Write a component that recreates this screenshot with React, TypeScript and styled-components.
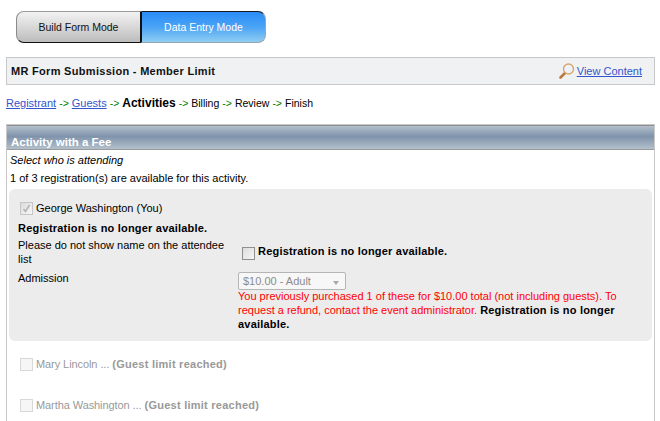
import * as React from "react";
import styled, { createGlobalStyle } from "styled-components";

const GlobalStyle = createGlobalStyle`
  html, body {
    margin: 0;
    padding: 0;
    background: #ffffff;
    overflow: hidden;
  }
  body {
    font-family: "Liberation Sans", Arial, sans-serif;
    font-size: 11px;
    color: #000000;
  }
`;

const Page = styled.div`
  width: 660px;
  height: 421px;
  overflow: hidden;
  padding: 11px 5px 0 6px;
  box-sizing: border-box;
`;

const ModeSwitch = styled.div`
  display: flex;
  width: 250px;
  height: 32px;
  margin-left: 10px;
`;

const ModeButton = styled.div<{ $active?: boolean }>`
  width: 125px;
  height: 32px;
  box-sizing: border-box;
  display: flex;
  align-items: center;
  justify-content: center;
  font-size: 10.5px;
  color: ${(p) => (p.$active ? "#ffffff" : "#111111")};
  border-radius: ${(p) => (p.$active ? "0 8px 8px 0" : "8px 0 0 8px")};
  background: ${(p) =>
    p.$active
      ? "linear-gradient(#2a8cf8 0%, #4aa3f5 50%, #8fcdf2 100%)"
      : "linear-gradient(#f2f2f2 0%, #d8d8d8 50%, #bcbcbc 100%)"};
  border-style: solid;
  border-width: 1px;
  border-color: ${(p) =>
    p.$active
      ? "#1a1a1a #9aa7b2 #9aa7b2 #111111"
      : "#9a9a9a #111111 #111111 #8a8a8a"};
`;

const TitleBar = styled.div`
  margin-top: 14px;
  height: 28px;
  box-sizing: border-box;
  display: flex;
  align-items: center;
  justify-content: space-between;
  padding: 0 6px 0 4px;
  background: #f0f1f3;
  border: 1px solid #c8c8c8;
`;

const Title = styled.div`
  font-weight: bold;
  font-size: 11px;
  letter-spacing: 0.3px;
  color: #111111;
`;

const ViewContent = styled.div`
  display: flex;
  align-items: center;
  gap: 2px;
  margin-right: 6px;
`;

const Link = styled.a`
  color: #3355cc;
  text-decoration: underline;
  font-size: 11px;
  cursor: pointer;
`;

const Steps = styled.div`
  margin-top: 11px;
  height: 14px;
  display: flex;
  align-items: center;
  gap: 3px;
  font-size: 10.5px;
  white-space: nowrap;
`;

const Arrow = styled.span`
  color: #008000;
  font-size: 10.5px;
`;

const CurrentStep = styled.span`
  font-size: 12px;
  font-weight: bold;
`;

const Panel = styled.div`
  margin-top: 14px;
  height: 300px;
  border-left: 1px solid #c8c8c8;
  border-right: 1px solid #c8c8c8;
  border-top: 1px solid #c8c8c8;
`;

const PanelHeader = styled.div`
  height: 25px;
  box-sizing: border-box;
  display: flex;
  align-items: flex-end;
  padding: 0 0 1px 4px;
  color: #ffffff;
  font-weight: bold;
  font-size: 11.5px;
  border-top: 1px solid #8e8e8e;
  border-bottom: 1px solid #9a9a9a;
  background: linear-gradient(#b4c0cc 0%, #7f93ab 45%, #b3bfcb 100%);
`;

const Prompt = styled.div`
  margin: 3px 0 0 3px;
  height: 14px;
  line-height: 14px;
  font-style: italic;
  font-size: 11px;
`;

const Availability = styled.div`
  margin: 4px 0 0 3px;
  height: 14px;
  line-height: 14px;
  font-size: 11px;
`;

const AttendeeCard = styled.div`
  margin: 4px 2px 0;
  height: 152px;
  box-sizing: border-box;
  padding: 9px 9px 0;
  background: #ececec;
  border-radius: 6px;
`;

const CheckRow = styled.div`
  display: flex;
  align-items: center;
  gap: 3px;
  height: 20px;
  padding-left: 2px;
  font-size: 11px;
`;

const Box = styled.span<{ $tone: "checked" | "plain" | "faded" }>`
  width: 13px;
  height: 13px;
  flex: none;
  display: inline-flex;
  align-items: center;
  justify-content: center;
  box-sizing: border-box;
  border: 1px solid ${(p) =>
    p.$tone === "plain" ? "#8f8f8f" : p.$tone === "faded" ? "#d8d8d8" : "#c6c6c6"};
  background: ${(p) =>
    p.$tone === "faded"
      ? "#f6f6f6"
      : "linear-gradient(135deg, #dcdcdc, #f6f6f6)"};
`;

const Unavailable = styled.div`
  font-weight: bold;
  font-size: 11px;
  letter-spacing: 0.2px;
  margin-top: 3px;
  height: 14px;
  line-height: 14px;
`;

const FormGrid = styled.div`
  display: grid;
  grid-template-columns: 220px 1fr;
  row-gap: 5px;
  margin-top: 3px;
  font-size: 11px;
`;

const FieldLabel = styled.div`
  line-height: 14px;
  width: 210px;
  font-size: 11px;
`;

const OptOut = styled.div`
  display: flex;
  align-items: flex-start;
  gap: 3px;
  padding: 6px 0 0 4px;
  font-weight: bold;
  font-size: 11px;
  letter-spacing: 0.2px;
  line-height: 14px;
  ${Box} {
    margin-top: 3px;
  }
`;

const Select = styled.div`
  width: 108px;
  height: 18px;
  margin-top: 1px;
  box-sizing: border-box;
  display: flex;
  align-items: center;
  justify-content: space-between;
  padding: 0 6px 0 4px;
  background: #f7f7f7;
  border: 1px solid #b5b5b5;
  border-radius: 2px;
  color: #8c8c8c;
  font-size: 11px;
`;

const Caret = styled.span`
  width: 0;
  height: 0;
  margin-top: 4px;
  border-left: 3.5px solid transparent;
  border-right: 3.5px solid transparent;
  border-top: 4px solid #a8a8a8;
`;

const Warning = styled.div`
  color: #ff0000;
  font-size: 11px;
  line-height: 14px;
  margin-top: -1px;
  width: 392px;
`;

const WarningStrong = styled.strong`
  color: #000000;
  letter-spacing: 0.2px;
`;

const GuestList = styled.div`
  display: flex;
  flex-direction: column;
  gap: 21px;
  padding: 13px 0 0 13px;
`;

const GuestRow = styled.div`
  display: flex;
  align-items: center;
  gap: 3px;
  height: 20px;
  color: #999999;
  font-size: 11px;
`;

const GuestName = styled.span`
  letter-spacing: -0.08px;
`;

const GuestNote = styled.strong`
  letter-spacing: 0.25px;
`;

const Magnifier = () => (
  <svg width="16" height="16" viewBox="0 0 16 16">
    <path d="M1.5 14.5 L6 10" stroke="#b9793f" strokeWidth="2.6" strokeLinecap="round" />
    <circle cx="9.5" cy="6" r="5" fill="#eef3fb" stroke="#d6a767" strokeWidth="1.4" />
  </svg>
);

const Tick = () => (
  <svg width="9" height="9" viewBox="0 0 9 9">
    <path d="M1.5 5 L3.5 7.5 L7.5 1" fill="none" stroke="#b4b4b4" strokeWidth="1.5" />
  </svg>
);

const steps = ["Billing", "Review", "Finish"];
const guests = ["Mary Lincoln", "Martha Washington"];

export default function App() {
  return (
    <Page>
      <GlobalStyle />
      <ModeSwitch>
        <ModeButton>Build Form Mode</ModeButton>
        <ModeButton $active>Data Entry Mode</ModeButton>
      </ModeSwitch>
      <TitleBar>
        <Title>MR Form Submission - Member Limit</Title>
        <ViewContent>
          <Magnifier />
          <Link>View Content</Link>
        </ViewContent>
      </TitleBar>
      <Steps>
        <Link>Registrant</Link>
        <Arrow>-&gt;</Arrow>
        <Link>Guests</Link>
        <Arrow>-&gt;</Arrow>
        <CurrentStep>Activities</CurrentStep>
        {steps.map((step) => (
          <React.Fragment key={step}>
            <Arrow>-&gt;</Arrow>
            <span>{step}</span>
          </React.Fragment>
        ))}
      </Steps>
      <Panel>
        <PanelHeader>Activity with a Fee</PanelHeader>
        <Prompt>Select who is attending</Prompt>
        <Availability>1 of 3 registration(s) are available for this activity.</Availability>
        <AttendeeCard>
          <CheckRow>
            <Box $tone="checked">
              <Tick />
            </Box>
            George Washington (You)
          </CheckRow>
          <Unavailable>Registration is no longer available.</Unavailable>
          <FormGrid>
            <FieldLabel>Please do not show name on the attendee list</FieldLabel>
            <OptOut>
              <Box $tone="plain" />
              Registration is no longer available.
            </OptOut>
            <FieldLabel>Admission</FieldLabel>
            <div>
              <Select>
                $10.00 - Adult
                <Caret />
              </Select>
              <Warning>
                You previously purchased 1 of these for $10.00 total (not including guests). To request a
                refund, contact the event administrator.{" "}
                <WarningStrong>Registration is no longer available.</WarningStrong>
              </Warning>
            </div>
          </FormGrid>
        </AttendeeCard>
        <GuestList>
          {guests.map((guest) => (
            <GuestRow key={guest}>
              <Box $tone="faded" />
              <GuestName>{guest} ...</GuestName>
              <GuestNote>(Guest limit reached)</GuestNote>
            </GuestRow>
          ))}
        </GuestList>
      </Panel>
    </Page>
  );
}
